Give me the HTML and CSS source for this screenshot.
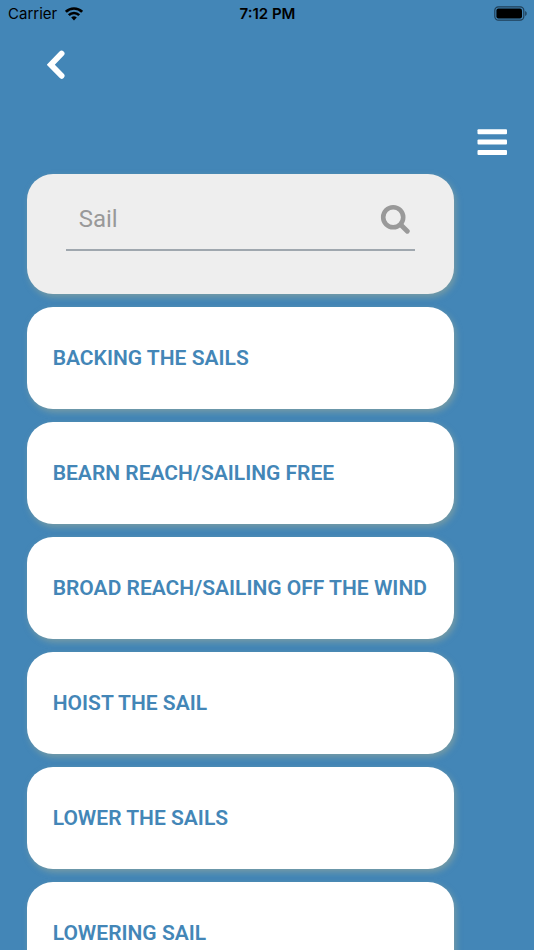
FILE: index.html
```html
<!DOCTYPE html>
<html lang="en">
<head>
  <meta charset="UTF-8">
  <title>Search Terms</title>
  <meta name="viewport" content="width=device-width, initial-scale=1.0">
  <link rel="stylesheet" href="styles.css">
</head>
<body>
  <div class="status-bar">
    <div class="carrier">
      <span>Carrier</span>
      <svg class="wifi" width="18" height="14" viewBox="0 0 18 14" fill="none" stroke="#000" stroke-width="2.6">
        <path d="M0.9 4.8a11.6 11.6 0 0 1 16.2 0"/>
        <path d="M3.8 8.1a7.4 7.4 0 0 1 10.4 0"/>
        <path d="M9 13.4L6.2 10.6a4 4 0 0 1 5.6 0Z" fill="#000" stroke="none"/>
      </svg>
    </div>
    <div class="time">7:12 PM</div>
    <div class="battery">
      <svg width="33" height="15" viewBox="0 0 33 15">
        <rect x="0.8" y="0.8" width="29" height="13.4" rx="3.6" fill="none" stroke="#1f3f58" stroke-width="1.2"/>
        <rect x="2.4" y="2.4" width="25.6" height="10.2" rx="2" fill="#000"/>
        <path d="M31.2 5v5c2-0.8 2-4.2 0-5Z" fill="#1f3f58"/>
      </svg>
    </div>
  </div>

  <header class="header">
    <button type="button" class="icon-btn back" aria-label="Back">
      <svg width="18" height="30" viewBox="0 0 18 30" fill="none" stroke="#fff" stroke-width="5.8" stroke-linecap="round" stroke-linejoin="miter">
        <path d="M14.6 3.6L3.8 14.7L14.6 25.8"/>
      </svg>
    </button>
    <button type="button" class="icon-btn menu" aria-label="Menu">
      <svg width="30" height="27" viewBox="0 0 30 27" fill="#fff">
        <rect x="0.5" y="0.2" width="29.5" height="5" rx="1"/>
        <rect x="0.5" y="10.6" width="29.5" height="5" rx="1"/>
        <rect x="0.5" y="21" width="29.5" height="5" rx="1"/>
      </svg>
    </button>
  </header>

  <main class="content">
    <form class="card search-card">
      <div class="search-field">
        <input type="text" name="search" value="Sail" aria-label="Search">
        <button type="submit" class="icon-btn" aria-label="Search">
          <svg width="30" height="30" viewBox="0 0 30 30" fill="none" stroke="#999" stroke-linecap="round">
            <circle cx="13.2" cy="13.2" r="10" stroke-width="4.6"/>
            <path d="M21 21L27.3 27.3" stroke-width="4.8"/>
          </svg>
        </button>
      </div>
    </form>

    <a href="#" class="card term">BACKING THE SAILS</a>
    <a href="#" class="card term">BEARN REACH/SAILING FREE</a>
    <a href="#" class="card term">BROAD REACH/SAILING OFF THE WIND</a>
    <a href="#" class="card term">HOIST THE SAIL</a>
    <a href="#" class="card term">LOWER THE SAILS</a>
    <a href="#" class="card term">LOWERING SAIL</a>
  </main>
</body>
</html>
```
FILE: styles.css
```css
body {
  font-family: Roboto, "Liberation Sans", sans-serif;
  background-color: #4386b7;
  margin: 0;
}
.status-bar {
  display: grid;
  grid-template-columns: 1fr auto 1fr;
  align-items: center;
  height: 27px;
  padding: 0 7px 0 8px;
  font-family: Inter, "Liberation Sans", sans-serif;
  font-size: 15px;
  color: #000;
}
.carrier {
  display: flex;
  align-items: center;
  gap: 8px;
}
.time {
  font-weight: 600;
}
.battery {
  display: flex;
  justify-content: flex-end;
}
.icon-btn {
  display: flex;
  padding: 0;
  border: none;
  background: none;
  cursor: pointer;
}
.header {
  display: flex;
  flex-direction: column;
  gap: 49px;
  padding: 23px 27px 18px 47px;
}
.menu {
  align-self: flex-end;
}
.content {
  display: flex;
  flex-direction: column;
  gap: 13px;
  width: 80%;
  margin-left: 5%;
  padding-bottom: 13px;
}
.card {
  box-sizing: border-box;
  border-radius: 26px;
  background-color: #fff;
  box-shadow: 2px 3px 6px rgba(153, 170, 153, 0.6);
}
.search-card {
  height: 120px;
  padding: 14px 39px;
  background-color: #eee;
}
.search-field {
  display: flex;
  align-items: center;
  height: 61px;
  padding: 0 5px 0 13px;
  border-bottom: 2px solid #9fa7ae;
}
.search-field input {
  flex: 1;
  min-width: 0;
  padding: 0;
  border: none;
  outline: none;
  background: none;
  font-family: Roboto, "Liberation Sans", sans-serif;
  font-size: 24px;
  color: #999;
}
.term {
  display: flex;
  align-items: center;
  height: 102px;
  padding: 0 26px;
  font-size: 21px;
  font-weight: 600;
  color: #4386b7;
  text-decoration: none;
}
```
